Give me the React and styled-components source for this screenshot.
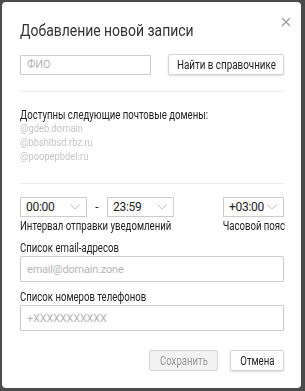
import React from "react";
import styled, { createGlobalStyle } from "styled-components";

const GlobalStyle = createGlobalStyle`
  body {
    margin: 0;
    background: #4b4b4b;
    font-family: Roboto, "Liberation Sans", sans-serif;
    color: #222;
  }
`;

const Overlay = styled.div`
  padding: 2px 0 0 2px;
`;

const Modal = styled.div`
  position: relative;
  width: 299px;
  box-sizing: border-box;
  background: #fff;
  border-radius: 4px;
  padding: 18px 17px 17px 18px;
`;

const CloseButton = styled.div`
  position: absolute;
  top: 10px;
  right: 10px;
  width: 10px;
  height: 10px;
  cursor: pointer;
`;

// the original face is a narrow sans, so roboto gets squeezed a bit
const Narrow = styled.span`
  display: inline-block;
  white-space: nowrap;
  transform: scaleX(${(p) => p.$scale || 0.8});
  transform-origin: ${(p) => p.$origin || "left"} center;
`;

const Title = styled.h2`
  margin: 0;
  font-size: 17px;
  line-height: 20px;
  font-weight: 400;
  color: #333;
`;

const Row = styled.div`
  display: flex;
  align-items: center;
  justify-content: space-between;
  margin-top: ${(p) => p.$top || 0}px;
`;

const TextInput = styled.input`
  box-sizing: border-box;
  width: ${(p) => p.$width || "100%"};
  height: ${(p) => p.$height || 26}px;
  border: 1px solid #ccc;
  border-radius: 1px;
  padding: 0 6px;
  font-family: inherit;
  font-size: 11px;
  letter-spacing: -0.2px;
  color: #333;
  outline: none;
  &::placeholder {
    color: #b5b5b5;
  }
`;

const Button = styled.button`
  box-sizing: border-box;
  width: ${(p) => p.$width}px;
  height: 21px;
  padding: 0;
  display: flex;
  align-items: center;
  justify-content: center;
  overflow: visible;
  border: 1px solid #d4d4d4;
  border-radius: 2px;
  background: ${(p) => (p.$disabled ? "#f2f2f2" : "#fff")};
  color: ${(p) => (p.$disabled ? "#9a9a9a" : "#222")};
  box-shadow: ${(p) => (p.$disabled ? "none" : "0 1px 2px rgba(0,0,0,0.15)")};
  font-family: inherit;
  font-size: 12px;
  cursor: pointer;
`;

const Divider = styled.div`
  height: 1px;
  background: #ebebeb;
  margin-top: ${(p) => p.$top}px;
`;

const Text = styled.div`
  min-width: 0;
  font-size: 12px;
  line-height: 14px;
  white-space: nowrap;
  color: #222;
  text-align: ${(p) => p.$align || "left"};
  margin-top: ${(p) => p.$top || 0}px;
`;

const Hidden = styled.div`
  font-size: 11px;
  line-height: 14px;
  color: #c4c4c4;
  filter: blur(0.7px);
`;

const Domains = styled.div`
  margin-top: 16px;
`;

const SelectBox = styled.div`
  box-sizing: border-box;
  width: ${(p) => p.$width}px;
  height: 20px;
  border: 1px solid #ccc;
  display: flex;
  align-items: center;
  justify-content: space-between;
  padding: 0 6px 0 5px;
  font-size: 12px;
  letter-spacing: -0.3px;
  color: #222;
`;

const TimeGroup = styled.div`
  display: flex;
  align-items: center;
`;

const Dash = styled.span`
  width: 20px;
  text-align: center;
  font-size: 12px;
`;

const Actions = styled.div`
  display: flex;
  justify-content: flex-end;
  gap: 12px;
  margin-top: 19px;
`;

const Chevron = () => (
  <svg width="10" height="6" viewBox="0 0 10 6">
    <path d="M0.5 0.5 L5 5 L9.5 0.5" fill="none" stroke="#b8b8b8" strokeWidth="0.9" />
  </svg>
);

const Select = ({ value, width }) => (
  <SelectBox $width={width}>
    <span>{value}</span>
    <Chevron />
  </SelectBox>
);

const App = () => (
  <Overlay>
    <GlobalStyle />
    <Modal>
      <CloseButton>
        <svg width="10" height="10" viewBox="0 0 10 10">
          <path d="M1 1 L9 9 M9 1 L1 9" stroke="#9a9a9a" strokeWidth="1.2" />
        </svg>
      </CloseButton>
      <Title>
        <Narrow $scale={0.82}>Добавление новой записи</Narrow>
      </Title>
      <Row $top={14}>
        <TextInput $width="131px" $height={20} placeholder="ФИО" />
        <Button $width={116}>
          <Narrow $scale={0.82} $origin="center">Найти в справочнике</Narrow>
        </Button>
      </Row>
      <Divider $top={16} />
      <Domains>
        <Text>
          <Narrow>Доступны следующие почтовые домены:</Narrow>
        </Text>
        <Hidden>
          <Narrow $scale={0.85}>@gdeb.domain</Narrow>
        </Hidden>
        <Hidden>
          <Narrow $scale={0.85}>@bbshlbsd.rbz.ru</Narrow>
        </Hidden>
        <Hidden>
          <Narrow $scale={0.85}>@poopepbdel.ru</Narrow>
        </Hidden>
      </Domains>
      <Divider $top={19} />
      <Row $top={13}>
        <TimeGroup>
          <Select value="00:00" width={67} />
          <Dash>-</Dash>
          <Select value="23:59" width={67} />
        </TimeGroup>
        <Select value="+03:00" width={61} />
      </Row>
      <Row $top={2}>
        <Text>
          <Narrow>Интервал отправки уведомлений</Narrow>
        </Text>
        <Text $align="right">
          <Narrow $origin="right">Часовой пояс</Narrow>
        </Text>
      </Row>
      <Text $top={8}>
        <Narrow>Список email-адресов</Narrow>
      </Text>
      <TextInput placeholder="email@domain.zone" style={{ marginTop: 1 }} />
      <Text $top={8}>
        <Narrow>Список номеров телефонов</Narrow>
      </Text>
      <TextInput placeholder="+XXXXXXXXXXX" style={{ marginTop: 1 }} />
      <Actions>
        <Button $width={69} $disabled>
          <Narrow $origin="center">Сохранить</Narrow>
        </Button>
        <Button $width={54}>
          <Narrow $origin="center">Отмена</Narrow>
        </Button>
      </Actions>
    </Modal>
  </Overlay>
);

export default App;
